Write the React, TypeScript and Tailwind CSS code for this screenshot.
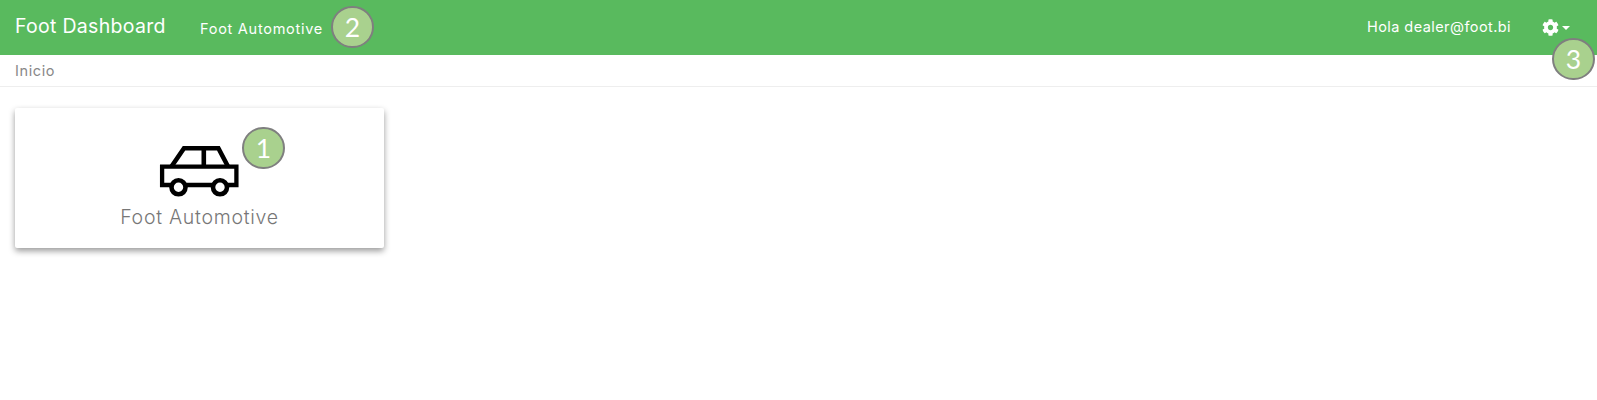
import React from "react";

function Marker({ value, className }: { value: number; className: string }) {
  return (
    <span
      className={`absolute flex h-[42px] w-[43px] items-center justify-center rounded-full border-2 border-[#7f7f7f] bg-[#a9d18e] font-['Lato','Noto_Sans',sans-serif] text-[26.5px] leading-none text-white ${className}`}
    >
      {value}
    </span>
  );
}

function CarIcon() {
  return (
    <svg className="-ml-[2px] h-[52px] w-[80px]" viewBox="0 0 80 52" fill="none" stroke="#000" strokeWidth="4.3">
      <path d="M12.5 21.5 25 3.3H59.4L69 21.5M44.8 3.3V21.5" strokeWidth="4.6" />
      <path d="M12.5 40H3.1V21.7H77.4V40H68M26.5 40H54" />
      <circle cx="19.5" cy="42.3" r="7" strokeWidth="4.6" />
      <circle cx="61" cy="42.3" r="7" strokeWidth="4.6" />
    </svg>
  );
}

function GearIcon() {
  return (
    <svg className="h-[17px] w-[17px]" viewBox="0 0 512 512" fill="currentColor">
      <path d="M487.4 315.7l-42.600-24.600c4.300-23.200 4.300-47 0-70.200l42.600-24.600c4.900-2.800 7.100-8.600 5.500-14-11.100-35.600-30-67.800-54.700-94.600-3.800-4.100-10-5.100-14.800-2.300L380.800 110c-17.900-15.400-38.500-27.300-60.800-35.100V25.800c0-5.600-3.900-10.500-9.400-11.700-36.700-8.200-74.300-7.800-109.200 0-5.500 1.200-9.400 6.100-9.400 11.700V75c-22.200 7.900-42.800 19.800-60.800 35.100L88.700 85.500c-4.900-2.800-11-1.900-14.800 2.300-24.700 26.700-43.600 58.900-54.700 94.600-1.700 5.400.600 11.200 5.500 14L67.300 221c-4.300 23.200-4.300 47 0 70.200l-42.600 24.600c-4.900 2.800-7.100 8.600-5.500 14 11.100 35.600 30 67.800 54.700 94.600 3.800 4.100 10 5.100 14.800 2.300l42.600-24.600c17.900 15.400 38.500 27.300 60.800 35.100v49.200c0 5.600 3.900 10.500 9.400 11.700 36.700 8.200 74.300 7.800 109.200 0 5.500-1.200 9.400-6.100 9.400-11.700v-49.200c22.200-7.900 42.800-19.800 60.800-35.100l42.600 24.600c4.900 2.800 11 1.900 14.800-2.300 24.700-26.700 43.600-58.900 54.700-94.600 1.500-5.500-.700-11.300-5.600-14.100zM256 336c-44.100 0-80-35.900-80-80s35.900-80 80-80 80 35.900 80 80-35.900 80-80 80z" />
    </svg>
  );
}

export default function App() {
  return (
    <div className="min-h-[400px] bg-white font-['Inter','Liberation_Sans',sans-serif]">
      <header className="relative flex h-[55px] items-center bg-[#59ba5e] pl-[15px] text-white">
        <a className="w-[185px] whitespace-nowrap pb-[3px] text-[19.5px] leading-6 tracking-[0.3px]">Foot Dashboard</a>
        <nav>
          <a className="block whitespace-nowrap pt-[2px] text-[14.5px] leading-5 tracking-[0.73px]">Foot Automotive</a>
        </nav>
        <Marker value={2} className="left-[331px] top-[6px]" />
        <span className="ml-auto w-[175px] whitespace-nowrap pb-px text-[14.5px] leading-5 tracking-[0.43px]">
          Hola dealer@foot.bi
        </span>
        <button className="mr-[27px] flex items-center gap-[3px] text-white">
          <GearIcon />
          <svg className="h-1 w-2" viewBox="0 0 8 4" fill="currentColor">
            <path d="M0 0h8L4 4z" />
          </svg>
        </button>
        <Marker value={3} className="left-[1552px] top-[38px]" />
      </header>
      <div className="flex h-8 items-center border-b border-[#eeeeee] pl-[15px] text-[14.5px] leading-5 tracking-[0.6px] text-[#888888]">
        Inicio
      </div>
      <main className="px-[15px] pt-[21px]">
        <section className="relative flex h-[140px] w-[369px] flex-col items-center rounded-[2px] bg-white pt-[37px] shadow-[0_3px_6px_rgba(0,0,0,0.4)]">
          <CarIcon />
          <h2 className="mt-2 whitespace-nowrap text-[19.5px] font-light leading-6 tracking-[0.73px] text-[#777777]">
            Foot Automotive
          </h2>
          <Marker value={1} className="left-[227px] top-[19px]" />
        </section>
      </main>
    </div>
  );
}
